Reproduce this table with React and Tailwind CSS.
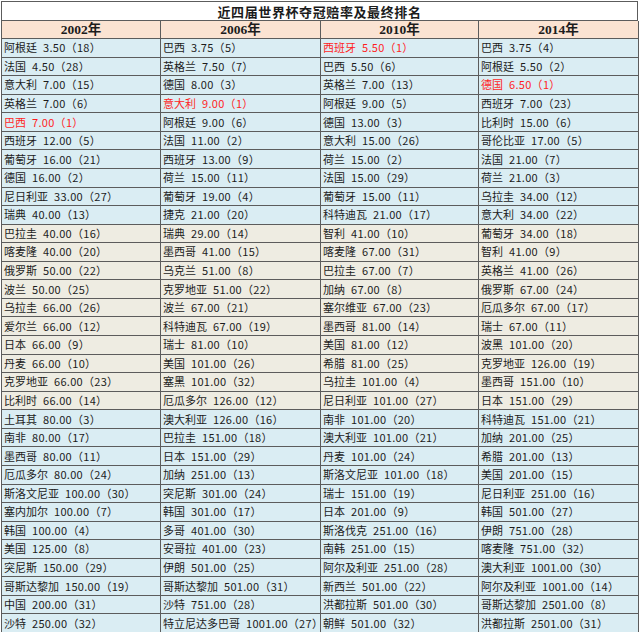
const years = ["2002年", "2006年", "2010年", "2014年"];

// each entry: [country, odds, final rank]
const cols = [
  [
    ["阿根廷", "3.50", "18"], ["法国", "4.50", "28"], ["意大利", "7.00", "15"], ["英格兰", "7.00", "6"],
    ["巴西", "7.00", "1"], ["西班牙", "12.00", "5"], ["葡萄牙", "16.00", "21"], ["德国", "16.00", "2"],
    ["尼日利亚", "33.00", "27"], ["瑞典", "40.00", "13"], ["巴拉圭", "40.00", "16"], ["喀麦隆", "40.00", "20"],
    ["俄罗斯", "50.00", "22"], ["波兰", "50.00", "25"], ["乌拉圭", "66.00", "26"], ["爱尔兰", "66.00", "12"],
    ["日本", "66.00", "9"], ["丹麦", "66.00", "10"], ["克罗地亚", "66.00", "23"], ["比利时", "66.00", "14"],
    ["土耳其", "80.00", "3"], ["南非", "80.00", "17"], ["墨西哥", "80.00", "11"], ["厄瓜多尔", "80.00", "24"],
    ["斯洛文尼亚", "100.00", "30"], ["塞内加尔", "100.00", "7"], ["韩国", "100.00", "4"], ["美国", "125.00", "8"],
    ["突尼斯", "150.00", "29"], ["哥斯达黎加", "150.00", "19"], ["中国", "200.00", "31"], ["沙特", "250.00", "32"],
  ],
  [
    ["巴西", "3.75", "5"], ["英格兰", "7.50", "7"], ["德国", "8.00", "3"], ["意大利", "9.00", "1"],
    ["阿根廷", "9.00", "6"], ["法国", "11.00", "2"], ["西班牙", "13.00", "9"], ["荷兰", "15.00", "11"],
    ["葡萄牙", "19.00", "4"], ["捷克", "21.00", "20"], ["瑞典", "29.00", "14"], ["墨西哥", "41.00", "15"],
    ["乌克兰", "51.00", "8"], ["克罗地亚", "51.00", "22"], ["波兰", "67.00", "21"], ["科特迪瓦", "67.00", "19"],
    ["瑞士", "81.00", "10"], ["美国", "101.00", "26"], ["塞黑", "101.00", "32"], ["厄瓜多尔", "126.00", "12"],
    ["澳大利亚", "126.00", "16"], ["巴拉圭", "151.00", "18"], ["日本", "151.00", "29"], ["加纳", "251.00", "13"],
    ["突尼斯", "301.00", "24"], ["韩国", "301.00", "17"], ["多哥", "401.00", "30"], ["安哥拉", "401.00", "23"],
    ["伊朗", "501.00", "25"], ["哥斯达黎加", "501.00", "31"], ["沙特", "751.00", "28"], ["特立尼达多巴哥", "1001.00", "27"],
  ],
  [
    ["西班牙", "5.50", "1"], ["巴西", "5.50", "6"], ["英格兰", "7.00", "13"], ["阿根廷", "9.00", "5"],
    ["德国", "13.00", "3"], ["意大利", "15.00", "26"], ["荷兰", "15.00", "2"], ["法国", "15.00", "29"],
    ["葡萄牙", "15.00", "11"], ["科特迪瓦", "21.00", "17"], ["智利", "41.00", "10"], ["喀麦隆", "67.00", "31"],
    ["巴拉圭", "67.00", "7"], ["加纳", "67.00", "8"], ["塞尔维亚", "67.00", "23"], ["墨西哥", "81.00", "14"],
    ["美国", "81.00", "12"], ["希腊", "81.00", "25"], ["乌拉圭", "101.00", "4"], ["尼日利亚", "101.00", "27"],
    ["南非", "101.00", "20"], ["澳大利亚", "101.00", "21"], ["丹麦", "101.00", "24"], ["斯洛文尼亚", "101.00", "18"],
    ["瑞士", "151.00", "19"], ["日本", "201.00", "9"], ["斯洛伐克", "251.00", "16"], ["南韩", "251.00", "15"],
    ["阿尔及利亚", "251.00", "28"], ["新西兰", "501.00", "22"], ["洪都拉斯", "501.00", "30"], ["朝鲜", "501.00", "32"],
  ],
  [
    ["巴西", "3.75", "4"], ["阿根廷", "5.50", "2"], ["德国", "6.50", "1"], ["西班牙", "7.00", "23"],
    ["比利时", "15.00", "6"], ["哥伦比亚", "17.00", "5"], ["法国", "21.00", "7"], ["荷兰", "21.00", "3"],
    ["乌拉圭", "34.00", "12"], ["意大利", "34.00", "22"], ["葡萄牙", "34.00", "18"], ["智利", "41.00", "9"],
    ["英格兰", "41.00", "26"], ["俄罗斯", "67.00", "24"], ["厄瓜多尔", "67.00", "17"], ["瑞士", "67.00", "11"],
    ["波黑", "101.00", "20"], ["克罗地亚", "126.00", "19"], ["墨西哥", "151.00", "10"], ["日本", "151.00", "29"],
    ["科特迪瓦", "151.00", "21"], ["加纳", "201.00", "25"], ["希腊", "201.00", "13"], ["美国", "201.00", "15"],
    ["尼日利亚", "251.00", "16"], ["韩国", "501.00", "27"], ["伊朗", "751.00", "28"], ["喀麦隆", "751.00", "32"],
    ["澳大利亚", "1001.00", "30"], ["阿尔及利亚", "1001.00", "14"], ["哥斯达黎加", "2501.00", "8"], ["洪都拉斯", "2501.00", "31"],
  ],
];

const rows = Array.from({ length: 32 }, (_, r) => cols.map((c) => c[r]));

export default function App() {
  return (
    <div className="w-[640px] h-[632px] bg-white overflow-hidden pt-[1px] pl-[1px] font-['Noto_Sans_CJK_SC',sans-serif] text-[#1c1c1c]">
      <div className="w-[637px] border-l border-t border-[#5c5c5c]">
        {/* title */}
        <div className="h-[19px] border-r border-b border-[#5c5c5c] bg-white flex items-center justify-center text-[13px] font-bold tracking-[0.6px] leading-none">
          近四届世界杯夺冠赔率及最终排名
        </div>

        {/* year headers */}
        <div className="grid grid-cols-[159px_160px_158px_160px] h-[18px]">
          {years.map((y) => (
            <div
              key={y}
              className="border-r border-b border-[#5c5c5c] bg-[#fbe3d2] flex items-center justify-center font-['Liberation_Serif','Noto_Sans_CJK_SC',serif] font-bold text-[13.5px] leading-none"
            >
              {y}
            </div>
          ))}
        </div>

        {/* data */}
        <div className="grid grid-cols-[159px_160px_158px_160px] grid-rows-[repeat(32,minmax(0,1fr))] h-[594px]">
          {rows.map((row, r) =>
            row.map(([name, odds, rank], c) => {
              const beige = r >= 10 && r <= 19;
              const champ = rank === "1";
              return (
                <div
                  key={r + "-" + c}
                  className={
                    "border-r border-b border-[#5c5c5c] flex items-center pl-[2px] text-[11px] leading-none whitespace-nowrap overflow-visible " +
                    (beige ? "bg-[#eeece2] " : "bg-[#daedf3] ") +
                    (champ ? "text-[#ff1f1f]" : "")
                  }
                >
                  <span>{name}</span>
                  <span className="ml-[6px] tracking-[0.3px]">{odds}</span>
                  <span className="tracking-[0.3px]">（{rank}）</span>
                </div>
              );
            })
          )}
        </div>
      </div>
    </div>
  );
}
